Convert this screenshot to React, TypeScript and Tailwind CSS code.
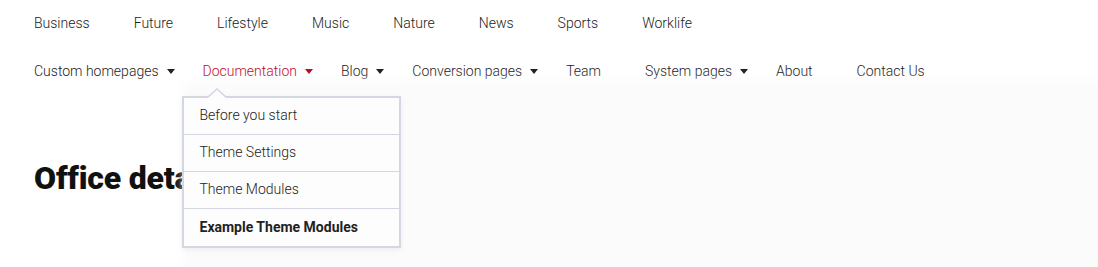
import { ReactNode } from 'react';

const topLinks = ['Business', 'Future', 'Lifestyle', 'Music', 'Nature', 'News', 'Sports', 'Worklife'];

interface MenuItem {
  label: string;
  hasMenu?: boolean;
  active?: boolean;
}

const mainLinks: MenuItem[] = [
  { label: 'Custom homepages', hasMenu: true },
  { label: 'Documentation', hasMenu: true, active: true },
  { label: 'Blog', hasMenu: true },
  { label: 'Conversion pages', hasMenu: true },
  { label: 'Team' },
  { label: 'System pages', hasMenu: true },
  { label: 'About' },
  { label: 'Contact Us' },
];

const docItems = ['Before you start', 'Theme Settings', 'Theme Modules', 'Example Theme Modules'];

function Caret({ red }: { red?: boolean }) {
  return (
    <svg width="8" height="5" viewBox="0 0 8 5" className={red ? 'fill-[#bd0a1f]' : 'fill-[#222]'}>
      <path d="M0 0h8L4 5z" />
    </svg>
  );
}

function Dropdown() {
  return (
    <div className="absolute left-[1px] top-[35px] z-10 w-[219px]">
      {/* soft backdrop shade behind the menu */}
      <div className="absolute left-[2px] top-[-15px] h-[240px] w-[960px] bg-[#fbfbfb] blur-[5px]" />
      <div className="relative border-2 border-[#d3d7e0] bg-[#fdfdfe] shadow-[0_2px_6px_rgba(0,0,0,0.06)]">
        <svg width="20" height="10" viewBox="0 0 20 10" className="absolute left-[23px] top-[-10px]">
          <path d="M0 10L10 1L20 10" fill="#fdfdfe" stroke="#d3d7e0" strokeWidth="1.5" />
        </svg>
        {docItems.map((item, i) => (
          <div
            key={item}
            className={
              'flex h-[37px] items-center px-[16px] text-[14px] text-[#222] ' +
              (i < docItems.length - 1 ? 'border-b border-[#d3d7e0] ' : '') +
              (i === docItems.length - 1 ? 'font-bold' : 'font-light')
            }
          >
            {item}
          </div>
        ))}
      </div>
    </div>
  );
}

function NavItem({ item, children }: { item: MenuItem; children?: ReactNode }) {
  return (
    <div className={'relative flex items-center pl-[22px] ' + (item.hasMenu ? 'pr-[6px]' : 'pr-[22px]')}>
      <span className={item.active ? 'text-[#bd0a1f]' : 'text-[#222]'}>{item.label}</span>
      {item.hasMenu && (
        <span className="ml-[8px] flex">
          <Caret red={item.active} />
        </span>
      )}
      {children}
    </div>
  );
}

export default function App() {
  return (
    <div className="h-[267px] w-[1098px] overflow-hidden bg-white font-['Roboto',sans-serif]">
      <nav className="flex h-[46px] items-center pl-[12px] text-[14px] font-light text-[#222]">
        {topLinks.map((l) => (
          <span key={l} className="px-[22px]">
            {l}
          </span>
        ))}
      </nav>
      <nav className="relative z-20 flex h-[50px] items-center pl-[12px] text-[14px] font-light">
        {mainLinks.map((item) => (
          <NavItem key={item.label} item={item}>
            {item.active && <Dropdown />}
          </NavItem>
        ))}
      </nav>
      <div className="relative z-0 px-[34px] pt-[66px]">
        <h1 className="text-[32px] font-black leading-none tracking-[-0.2px] text-[#111]">Office details</h1>
      </div>
    </div>
  );
}
